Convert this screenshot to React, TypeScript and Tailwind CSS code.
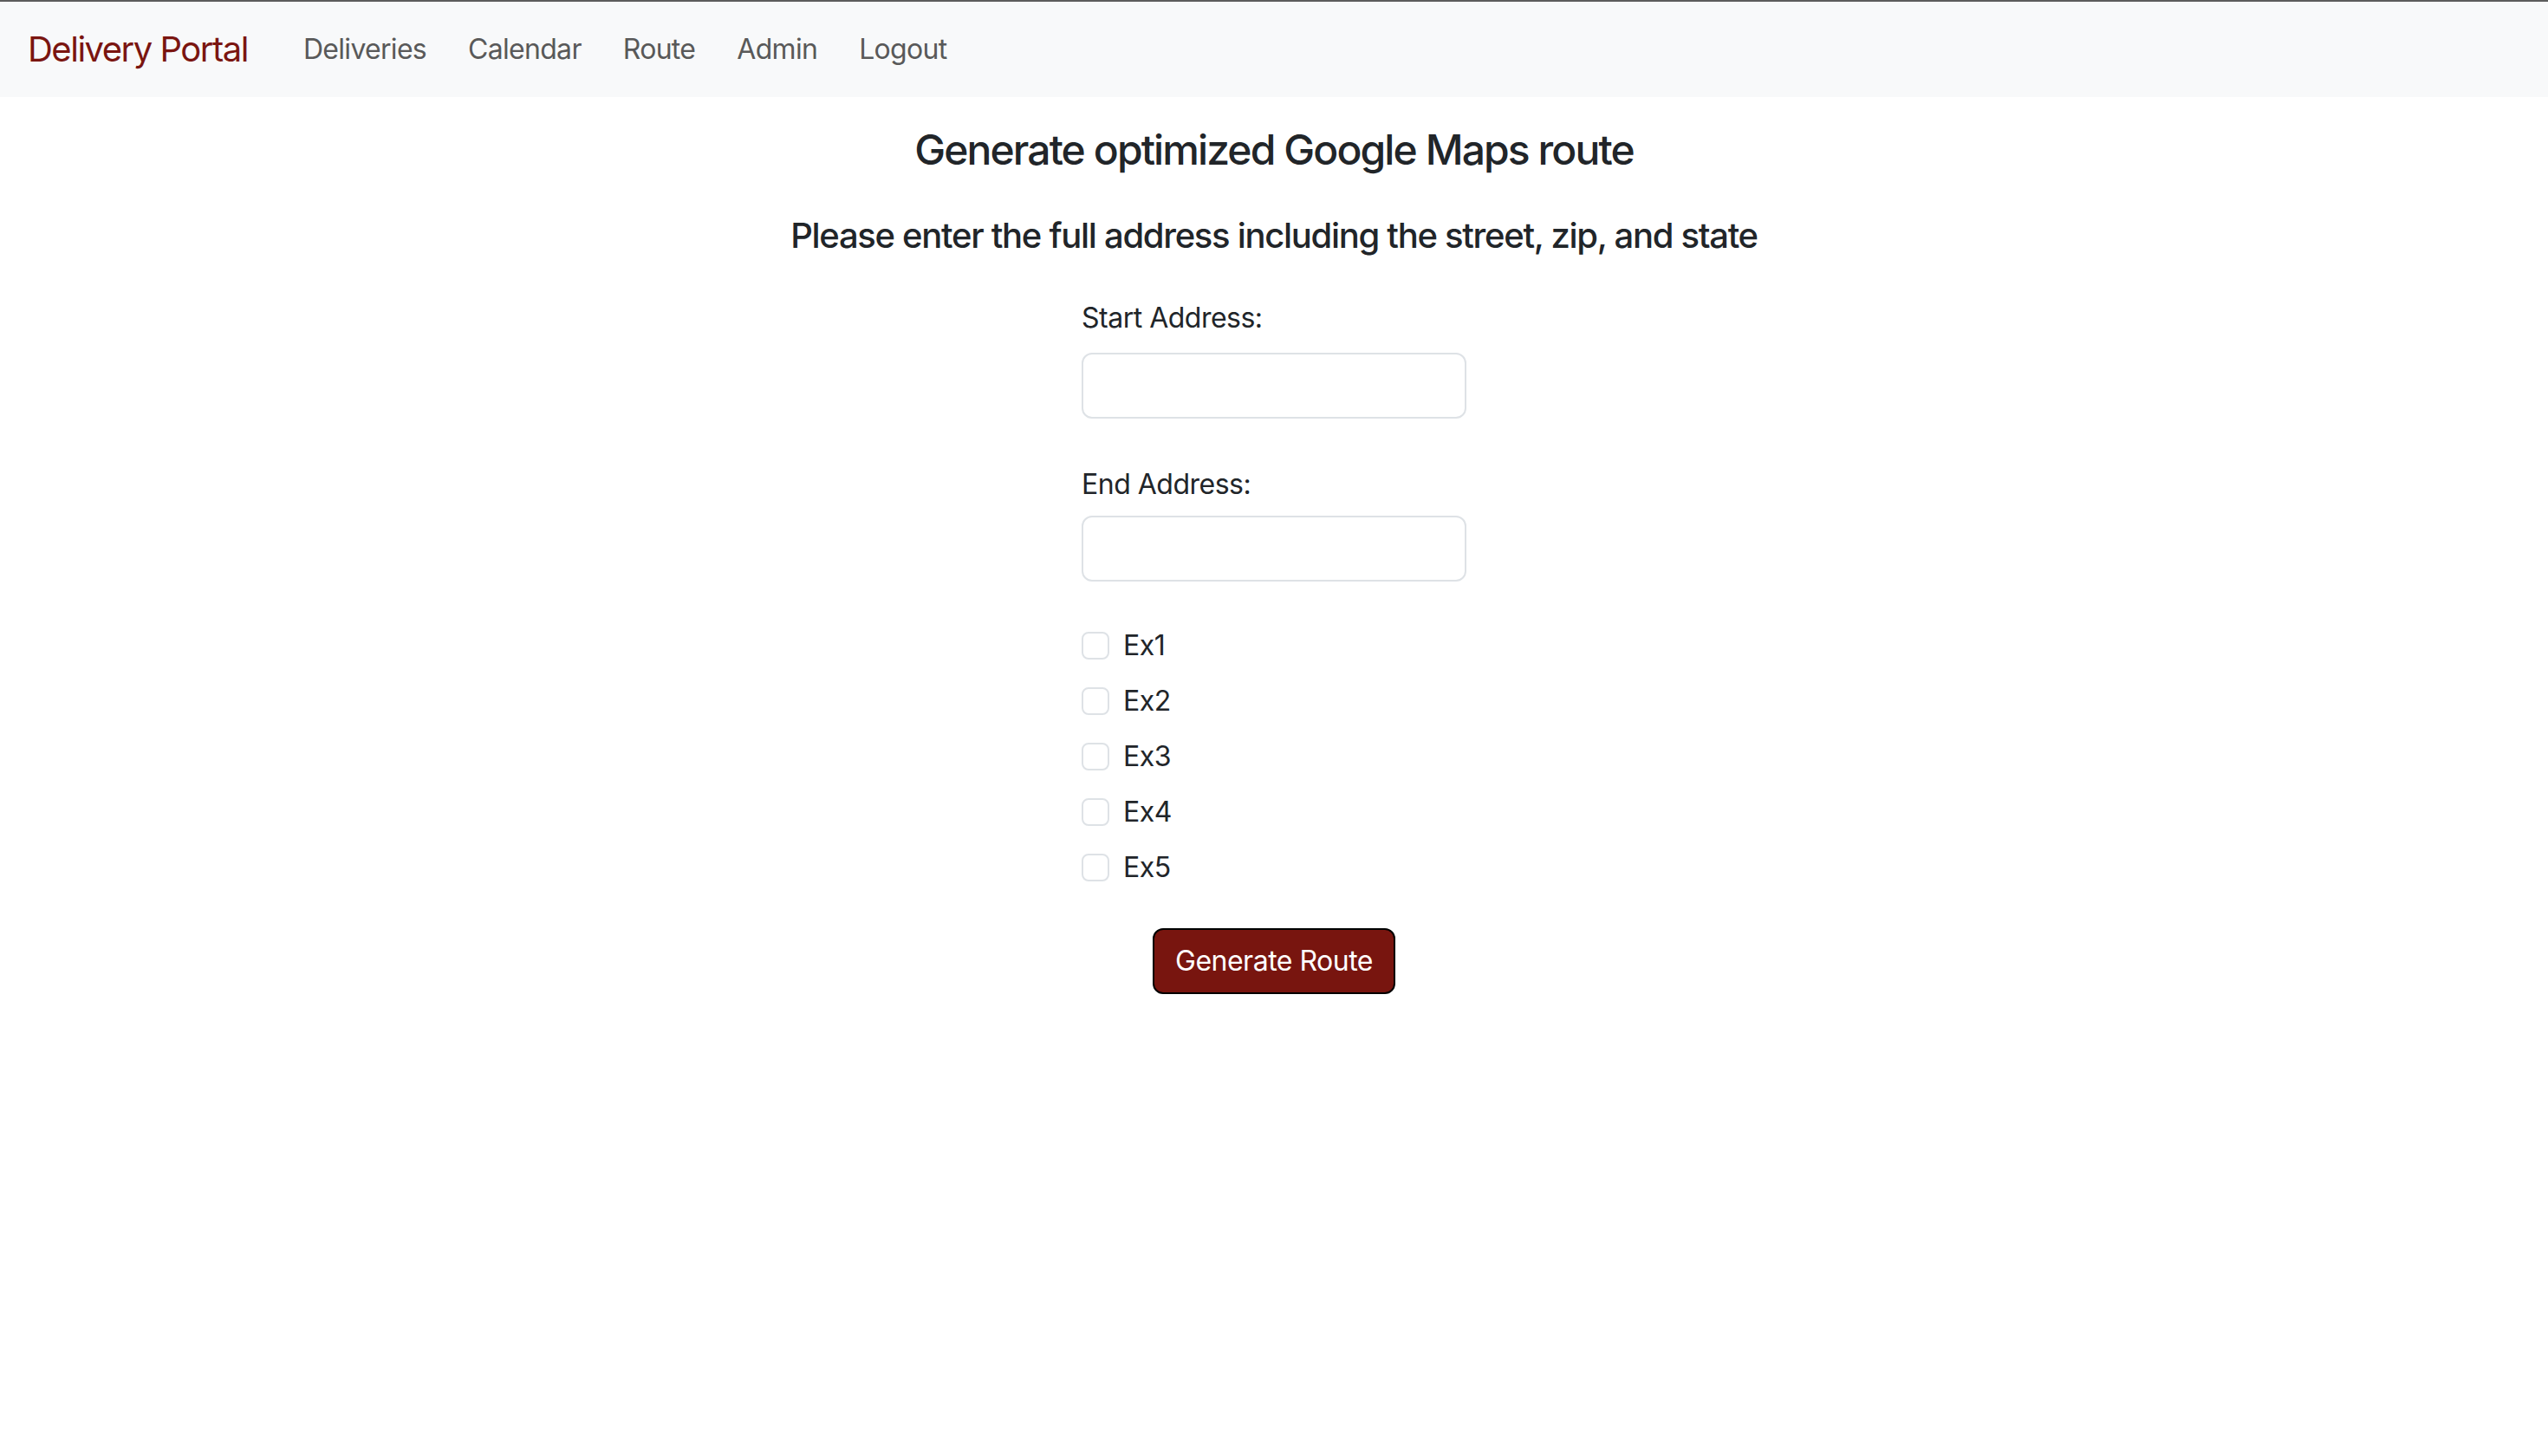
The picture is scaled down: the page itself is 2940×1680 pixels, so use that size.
import { useState } from 'react'

const links = ['Deliveries', 'Calendar', 'Route', 'Admin', 'Logout']
const stops = ['Ex1', 'Ex2', 'Ex3', 'Ex4', 'Ex5']

export default function App() {
  const [start, setStart] = useState('')
  const [end, setEnd] = useState('')
  const [checked, setChecked] = useState<string[]>([])

  const toggle = (s: string) =>
    setChecked((prev) => (prev.includes(s) ? prev.filter((x) => x !== s) : [...prev, s]))

  return (
    <div className="min-h-screen bg-white text-[#212529] font-['Inter','Liberation_Sans',sans-serif]">
      <nav className="h-[112px] bg-[#f8f9fa] border-t-2 border-[#5c5c5c] flex items-center px-[32px]">
        <a className="text-[40px] leading-[60px] text-[#7a1510] mr-[40px] tracking-[-1.5px]">Delivery Portal</a>
        <div className="flex">
          {links.map((l) => (
            <a key={l} className="px-[24px] text-[32px] leading-[48px] text-[#595959] tracking-[-0.7px]">
              {l}
            </a>
          ))}
        </div>
      </nav>

      <main className="flex flex-col items-center">
        <h4 className="mt-[32px] text-[48px] leading-[58px] font-medium tracking-[-1.9px]">
          Generate optimized Google Maps route
        </h4>
        <h5 className="mt-[46px] text-[40px] leading-[48px] font-medium tracking-[-1.3px]">
          Please enter the full address including the street, zip, and state
        </h5>

        <form className="w-[444px] mt-[47px] flex flex-col tracking-[-0.5px]" onSubmit={(e) => e.preventDefault()}>
          <label className="text-[32px] leading-[48px]">Start Address:</label>
          <input
            value={start}
            onChange={(e) => setStart(e.target.value)}
            className="mt-[16px] h-[76px] w-full rounded-[12px] border-2 border-[#dee2e6] px-[24px] text-[32px] outline-none"
          />
          <label className="mt-[52px] text-[32px] leading-[48px]">End Address:</label>
          <input
            value={end}
            onChange={(e) => setEnd(e.target.value)}
            className="mt-[12px] h-[76px] w-full rounded-[12px] border-2 border-[#dee2e6] px-[24px] text-[32px] outline-none"
          />

          <div className="mt-[50px] flex flex-col gap-[16px]">
            {stops.map((s) => (
              <label key={s} className="flex items-center h-[48px] text-[32px]">
                <span
                  onClick={() => toggle(s)}
                  className={
                    checked.includes(s)
                      ? 'w-[32px] h-[32px] rounded-[8px] border-2 border-[#7a1510] bg-[#7a1510]'
                      : 'w-[32px] h-[32px] rounded-[8px] border-2 border-[#dee2e6] bg-white'
                  }
                />
                <span className="ml-[16px]">{s}</span>
              </label>
            ))}
          </div>

          <div className="mt-[46px] flex justify-center">
            <button
              type="submit"
              className="h-[76px] px-[24px] rounded-[12px] border-2 border-black bg-[#78150f] text-white text-[32px] leading-[48px]"
            >
              Generate Route
            </button>
          </div>
        </form>
      </main>
    </div>
  )
}
